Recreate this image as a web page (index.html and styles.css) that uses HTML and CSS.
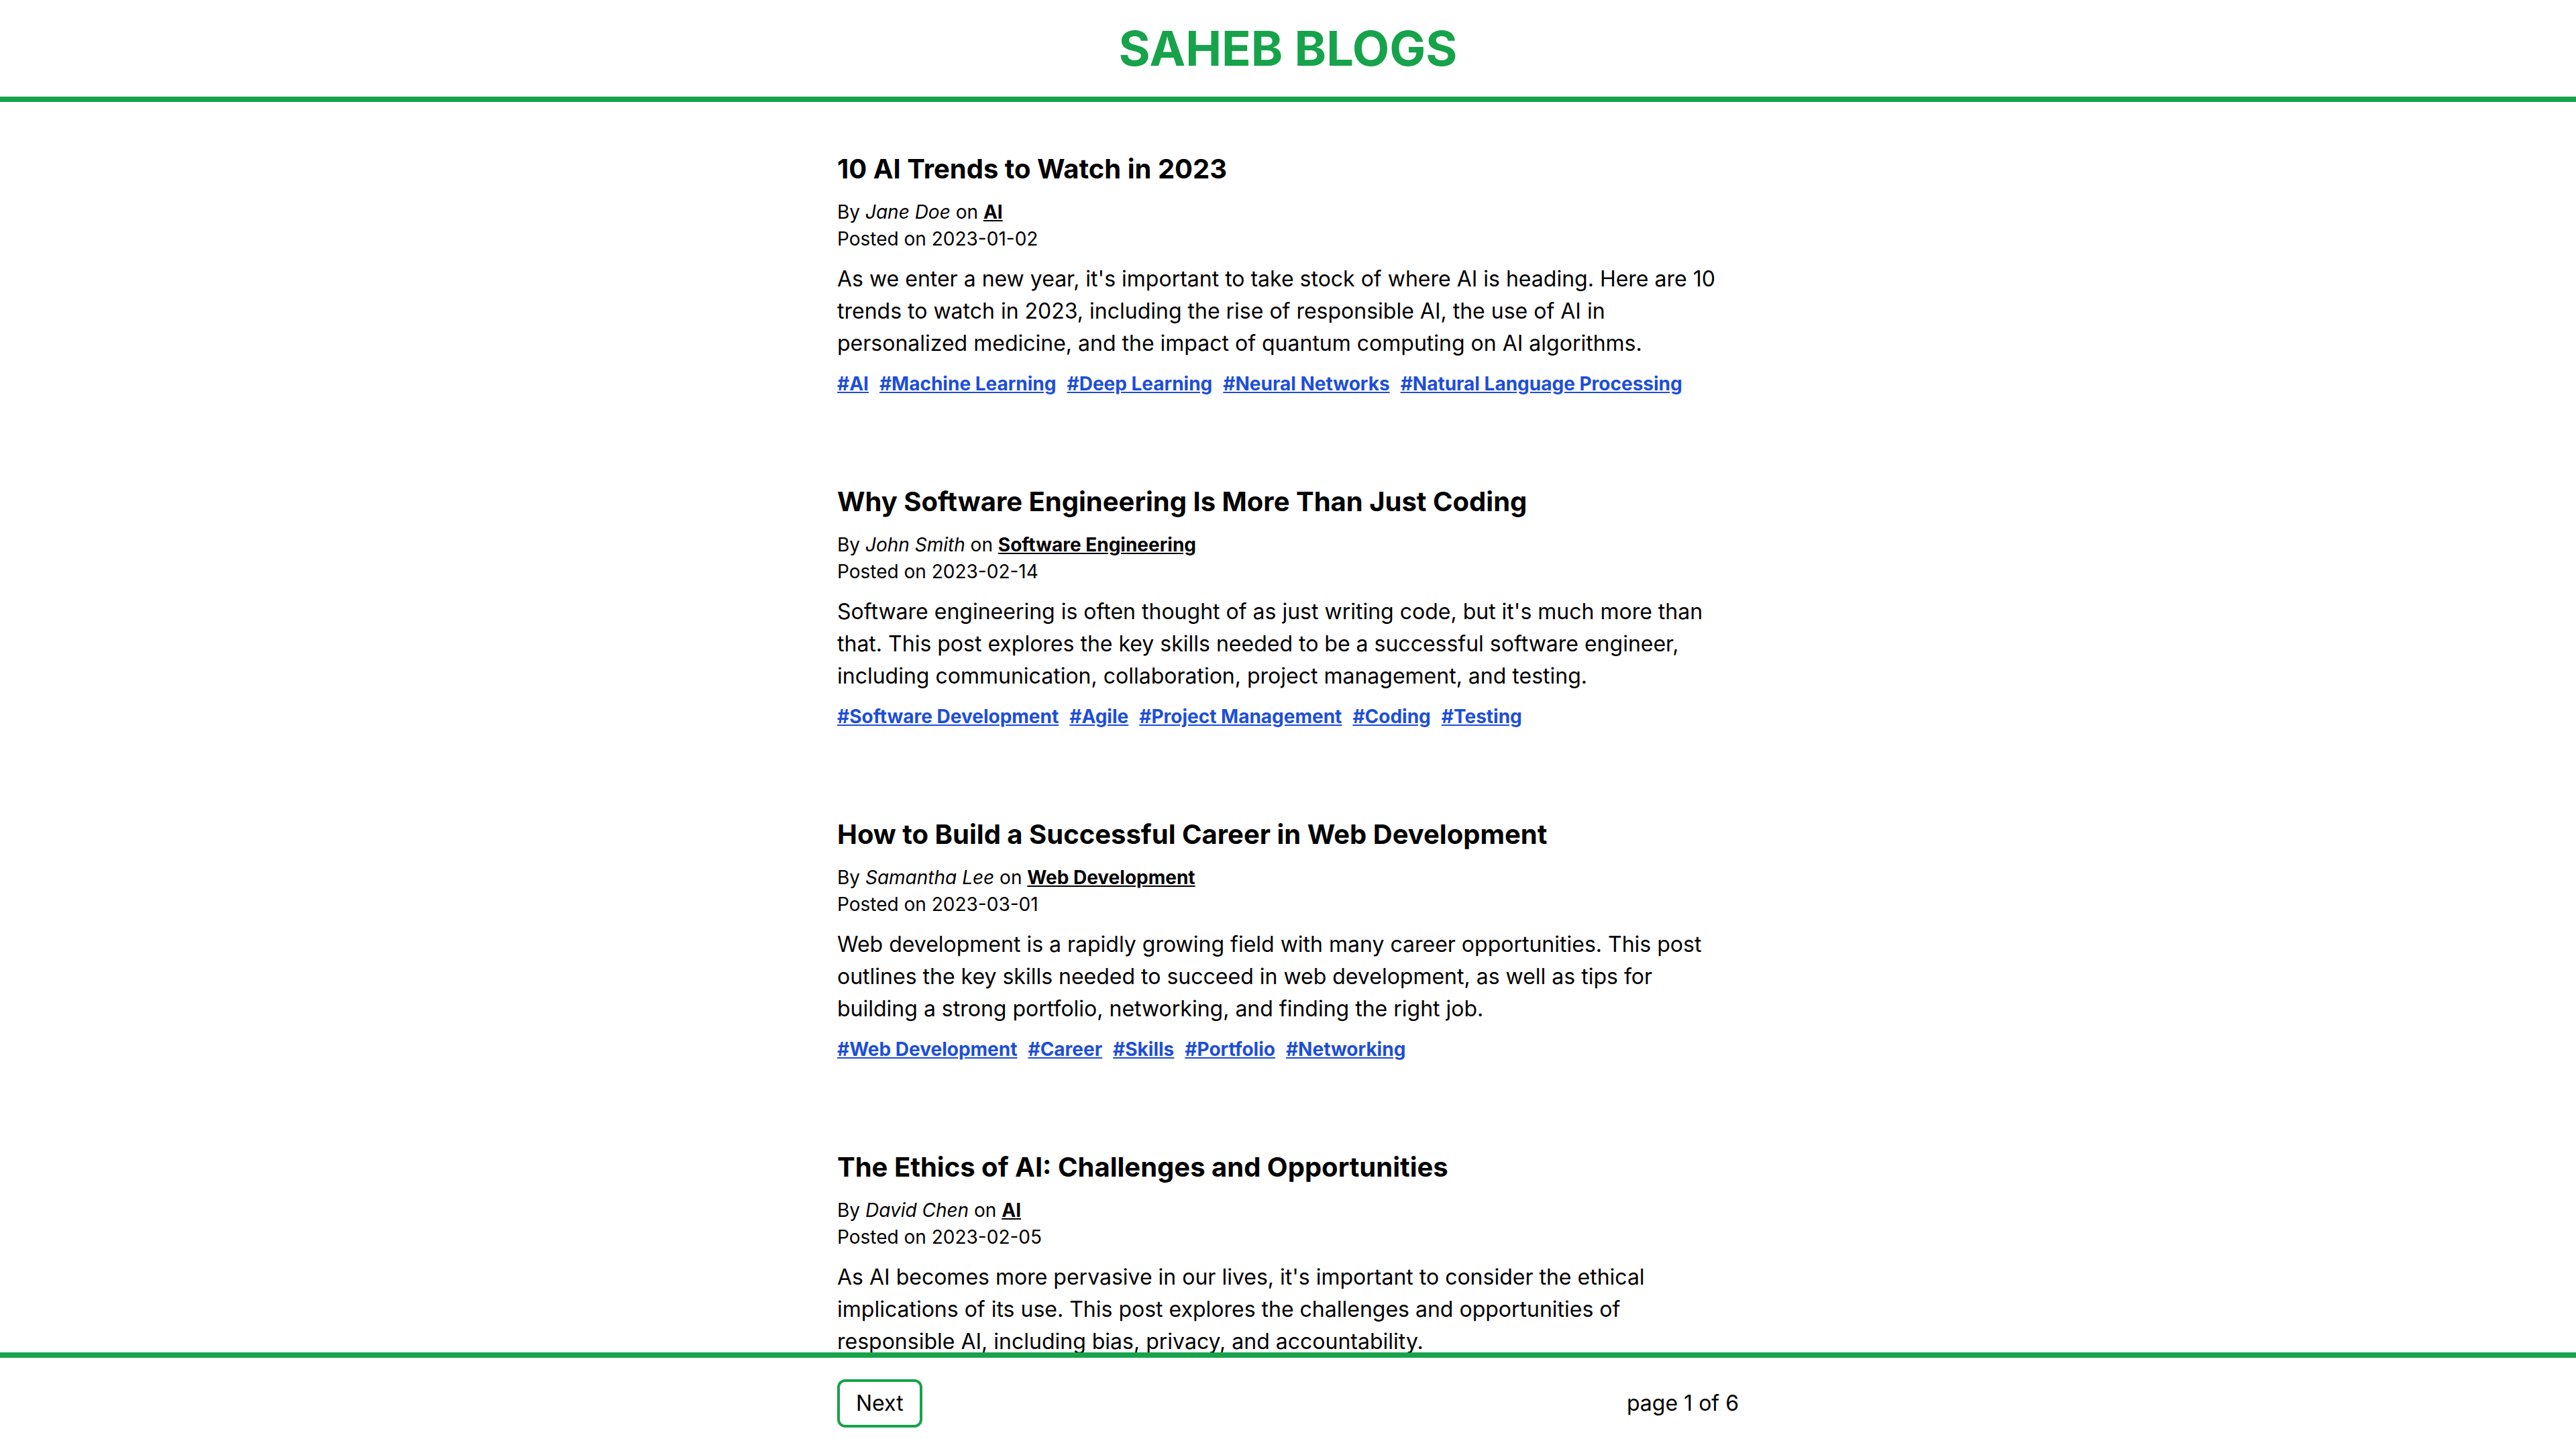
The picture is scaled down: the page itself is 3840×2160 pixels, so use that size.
FILE: index.html
```html
<!DOCTYPE html>
<html lang="en">
<head>
<meta charset="utf-8">
<title>Saheb Blogs</title>
<link rel="stylesheet" href="styles.css">
</head>
<body>
<header class="site-header">
  <h1 class="site-title">SAHEB BLOGS</h1>
</header>
<main class="posts">
  <article class="post">
    <h2 class="post-title">10 AI Trends to Watch in 2023</h2>
    <div class="post-meta">
      <p>By <em>Jane Doe</em> on <a class="category" href="#">AI</a></p>
      <p>Posted on 2023-01-02</p>
    </div>
    <p class="post-body">As we enter a new year, it's important to take stock of where AI is heading. Here are 10 trends to watch in 2023, including the rise of responsible AI, the use of AI in personalized medicine, and the impact of quantum computing on AI algorithms.</p>
    <div class="tags">
      <a href="#">#AI</a><a href="#">#Machine Learning</a><a href="#">#Deep Learning</a><a href="#">#Neural Networks</a><a href="#">#Natural Language Processing</a>
    </div>
  </article>
  <article class="post">
    <h2 class="post-title">Why Software Engineering Is More Than Just Coding</h2>
    <div class="post-meta">
      <p>By <em>John Smith</em> on <a class="category" href="#">Software Engineering</a></p>
      <p>Posted on 2023-02-14</p>
    </div>
    <p class="post-body">Software engineering is often thought of as just writing code, but it's much more than that. This post explores the key skills needed to be a successful software engineer, including communication, collaboration, project management, and testing.</p>
    <div class="tags">
      <a href="#">#Software Development</a><a href="#">#Agile</a><a href="#">#Project Management</a><a href="#">#Coding</a><a href="#">#Testing</a>
    </div>
  </article>
  <article class="post">
    <h2 class="post-title">How to Build a Successful Career in Web Development</h2>
    <div class="post-meta">
      <p>By <em>Samantha Lee</em> on <a class="category" href="#">Web Development</a></p>
      <p>Posted on 2023-03-01</p>
    </div>
    <p class="post-body">Web development is a rapidly growing field with many career opportunities. This post outlines the key skills needed to succeed in web development, as well as tips for building a strong portfolio, networking, and finding the right job.</p>
    <div class="tags">
      <a href="#">#Web Development</a><a href="#">#Career</a><a href="#">#Skills</a><a href="#">#Portfolio</a><a href="#">#Networking</a>
    </div>
  </article>
  <article class="post">
    <h2 class="post-title">The Ethics of AI: Challenges and Opportunities</h2>
    <div class="post-meta">
      <p>By <em>David Chen</em> on <a class="category" href="#">AI</a></p>
      <p>Posted on 2023-02-05</p>
    </div>
    <p class="post-body">As AI becomes more pervasive in our lives, it's important to consider the ethical implications of its use. This post explores the challenges and opportunities of responsible AI, including bias, privacy, and accountability.</p>
    <div class="tags">
      <a href="#">#AI</a><a href="#">#Ethics</a><a href="#">#Responsible AI</a><a href="#">#Bias</a><a href="#">#Privacy</a>
    </div>
  </article>
</main>
<footer class="site-footer">
  <div class="footer-inner">
    <button class="next-btn" type="button">Next</button>
    <span class="page-info">page 1 of 6</span>
  </div>
</footer>
</body>
</html>
```

FILE: styles.css
```css
* {
  box-sizing: border-box;
}

html, body {
  margin: 0;
  padding: 0;
}

body {
  font-family: Inter, "Noto Sans", sans-serif;
  color: #000;
  background: #fff;
}

p, h1, h2 {
  margin: 0;
}

.site-header {
  padding: 32px 0;
  border-bottom: 8px solid #16a34a;
  text-align: center;
}

.site-title {
  font-size: 72px;
  line-height: 80px;
  font-weight: 700;
  color: #16a34a;
}

.posts {
  max-width: 1344px;
  margin: 0 auto;
  padding: 72px 10px 200px 0;
}

.post {
  margin-bottom: 128px;
}

.post-title {
  font-size: 40px;
  line-height: 56px;
  font-weight: 700;
}

.post-meta {
  margin-top: 16px;
  font-size: 28px;
  line-height: 40px;
}

.category {
  color: #000;
  font-weight: 700;
  text-decoration: underline;
}

.post-body {
  margin-top: 16px;
  font-size: 32px;
  line-height: 48px;
}

.tags {
  margin-top: 16px;
  display: flex;
  flex-wrap: wrap;
  gap: 0 16px;
  font-size: 28px;
  line-height: 40px;
  font-weight: 700;
}

.tags a {
  color: #1d4ed8;
  text-decoration: underline;
}

.site-footer {
  position: fixed;
  left: 0;
  right: 0;
  bottom: 0;
  background: #fff;
  border-top: 8px solid #16a34a;
  padding: 32px 0;
}

.footer-inner {
  max-width: 1344px;
  margin: 0 auto;
  display: flex;
  justify-content: space-between;
  align-items: center;
}

.next-btn {
  font-family: inherit;
  font-size: 32px;
  line-height: 48px;
  padding: 8px 24px;
  border: 4px solid #16a34a;
  border-radius: 12px;
  background: #fff;
  color: #000;
}

.page-info {
  font-size: 32px;
  line-height: 48px;
}
```
